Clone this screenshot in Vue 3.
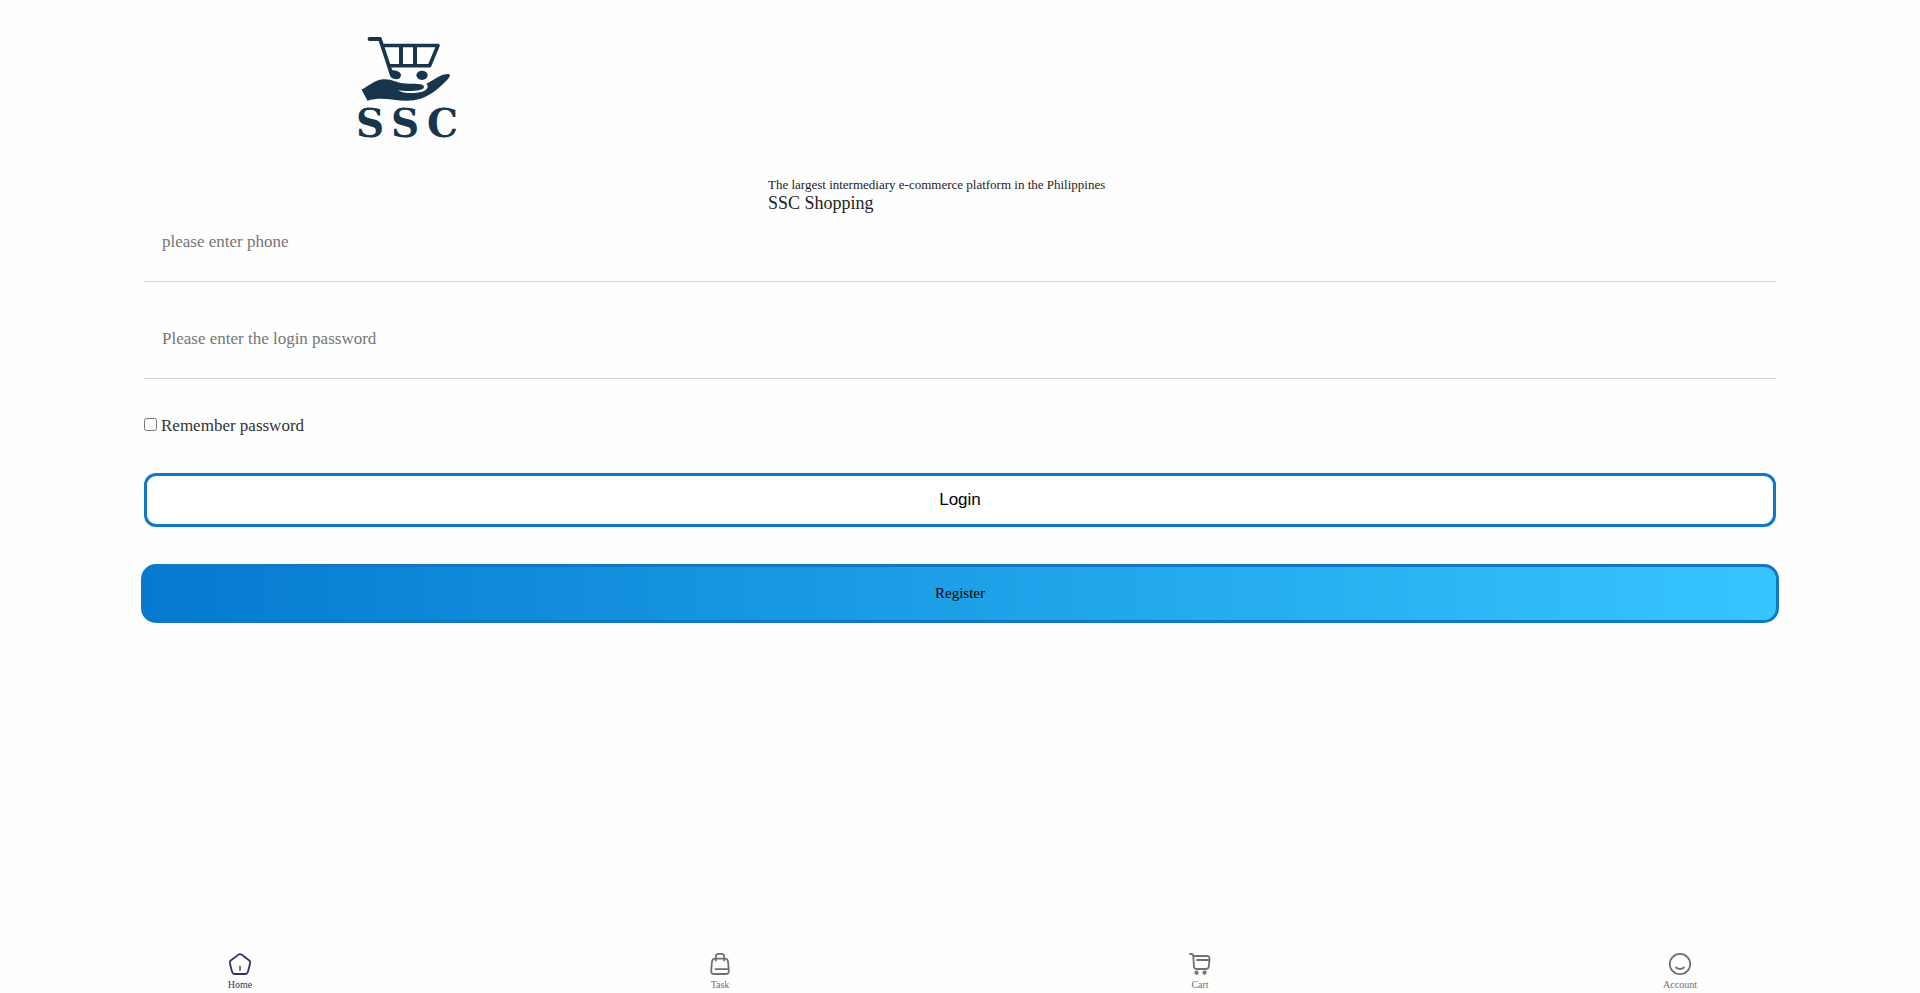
<script setup>
import { ref } from 'vue'

const phone = ref('')
const password = ref('')
const remember = ref(false)
</script>

<template>
  <div class="page">
    <header class="head">
      <svg class="logo" viewBox="0 0 140 130" role="img" aria-label="SSC logo">
        <g fill="none" stroke="#18364b" stroke-linecap="round" stroke-linejoin="round">
          <path d="M29.500 19H40L51.500 54" stroke-width="3.800" />
          <path d="M44 25.500H98L89.500 45.800H49" stroke-width="3.600" />
          <path d="M61 26V45M75 26V45" stroke-width="4" stroke-linecap="butt" />
        </g>
        <g fill="#18364b">
          <path d="M50 50C54 50 61 51 61 55C61 59 57 60 53 58.500C50 57.500 49 54 50 50Z" />
          <ellipse cx="82" cy="55.300" rx="5.600" ry="4.600" />
          <path d="M21.500 69.500C29 66 34 60 43 59.200C52 58.500 56 63 66 63.500C74 64 84 63 84 67C84 70 76 71 69 71C65 71 60 70.500 58 70.500C65 74.500 86 74 87.500 67.500C88 65.500 87 64.500 86.500 63.500C94 60.500 99 54 109 54C111 55.500 109 58 107 60C98 69 87 80.500 67 80.800C54 81 42 76 27.500 80.800Z" />
        </g>
        <text class="mark" x="16 51 87" y="116.500">SSC</text>
      </svg>
      <div class="titles">
        <p class="tagline">The largest intermediary e-commerce platform in the Philippines</p>
        <h1 class="name">SSC Shopping</h1>
      </div>
    </header>

    <form class="form" @submit.prevent>
      <input v-model="phone" class="field" type="tel" placeholder="please enter phone" aria-label="Phone" />
      <input v-model="password" class="field second" type="password" placeholder="Please enter the login password" aria-label="Password" />
      <div class="remember">
        <input id="remember" v-model="remember" type="checkbox" />
        <label for="remember">Remember password</label>
      </div>
      <button class="login" type="submit">Login</button>
      <button class="register" type="button">Register</button>
    </form>

    <nav class="tabs">
      <a class="tab active" href="#home">
        <svg viewBox="0 0 24 24">
          <path d="M10.500 2.600Q12 1.500 13.500 2.600L21 8.200Q22.600 9.400 22.100 11.300L20 19.600Q19.400 22 17 22H7Q4.600 22 4 19.600L1.900 11.300Q1.400 9.400 3 8.200Z" />
          <path d="M12 14.500V18" stroke="#666" />
        </svg>
        <span>Home</span>
      </a>
      <a class="tab" href="#task">
        <svg viewBox="0 0 24 24">
          <path d="M7 6.700H17Q19.500 6.700 20 9.500L20.800 18.500Q21 22 18 22H6Q3 22 3.200 18.500L4 9.500Q4.500 6.700 7 6.700ZM7.800 8.500V4.500Q7.800 1.900 10.300 1.900H13.700Q16.200 1.900 16.200 4.500V8.500M7.500 17.200H20" />
        </svg>
        <span>Task</span>
      </a>
      <a class="tab" href="#cart">
        <svg viewBox="0 0 24 24">
          <path d="M2 2H3.500Q5 2 5.200 3.700L6 14.500Q6.200 17 8.500 17H18Q20.500 17 20.800 14.500L21.500 7Q21.700 4 19 4H5.500M9 8H21" />
          <circle cx="8.500" cy="20.700" r="1.200" /><circle cx="16.500" cy="20.700" r="1.200" />
        </svg>
        <span>Cart</span>
      </a>
      <a class="tab" href="#account">
        <svg viewBox="0 0 24 24">
          <circle cx="12" cy="12" r="10.200" />
          <path d="M8 15.500Q12 18.500 16 15.500" />
        </svg>
        <span>Account</span>
      </a>
    </nav>
  </div>
</template>

<style>
body {
  margin: 0;
  background: #fefefe;
}
</style>

<style scoped>
.page {
  box-sizing: border-box;
  min-height: 100vh;
  display: flex;
  flex-direction: column;
  color: #222;
  font-family: "Liberation Serif", "Times New Roman", serif;
}
.head {
  display: grid;
  grid-template-columns: 2fr 3fr;
  padding-top: 20px;
}
.logo {
  width: 140px;
  height: 130px;
  margin-left: 52px;
  justify-self: center;
}
.mark {
  font: bold 39px "DejaVu Serif", serif;
  fill: #18364b;
}
.titles {
  grid-row: 2;
  grid-column: 2;
  padding-top: 27px;
}
.tagline {
  margin: 0;
  font-size: 13px;
  line-height: 16px;
}
.name {
  margin: 0;
  font-size: 18px;
  font-weight: 400;
  line-height: 20px;
}
.form {
  margin: 0 7.5%;
  display: flex;
  flex-direction: column;
}
.field {
  box-sizing: border-box;
  width: 100%;
  height: 69px;
  padding: 0 18px 10px;
  border: 0;
  border-bottom: 1px solid #d3d3d3;
  background: transparent;
  font: 17px "Liberation Serif", "Times New Roman", serif;
}
.field::placeholder {
  color: #757575;
}
.field.second {
  margin-top: 28px;
}
.remember {
  display: flex;
  align-items: center;
  gap: 4px;
  margin-top: 37px;
  color: #333;
  font-size: 17px;
  line-height: 20px;
}
.remember input {
  width: 13px;
  height: 13px;
  margin: 0 0 3px;
}
.login,
.register {
  box-sizing: border-box;
  padding: 0;
  border: 3px solid #1078c4;
  color: #000;
}
.login {
  height: 54px;
  margin-top: 37px;
  border-radius: 12px;
  background: #fff;
  font: 17px "Liberation Sans", Arial, sans-serif;
}
.register {
  height: 59px;
  margin: 37px -3px 0;
  border-radius: 15px;
  background: linear-gradient(90deg, #057acf, #36c5ff);
  font: 15px "Liberation Serif", "Times New Roman", serif;
}
.tabs {
  display: flex;
  margin-top: auto;
  padding-bottom: 2px;
}
.tab {
  flex: 1;
  display: flex;
  flex-direction: column;
  align-items: center;
  gap: 3px;
  color: #707070;
  font-size: 10px;
  line-height: 12px;
  text-decoration: none;
}
.tab svg {
  width: 24px;
  height: 24px;
  fill: none;
  stroke: currentColor;
  stroke-width: 1.8;
  stroke-linecap: round;
  stroke-linejoin: round;
}
.tab.active {
  color: #2f3362;
}
</style>
